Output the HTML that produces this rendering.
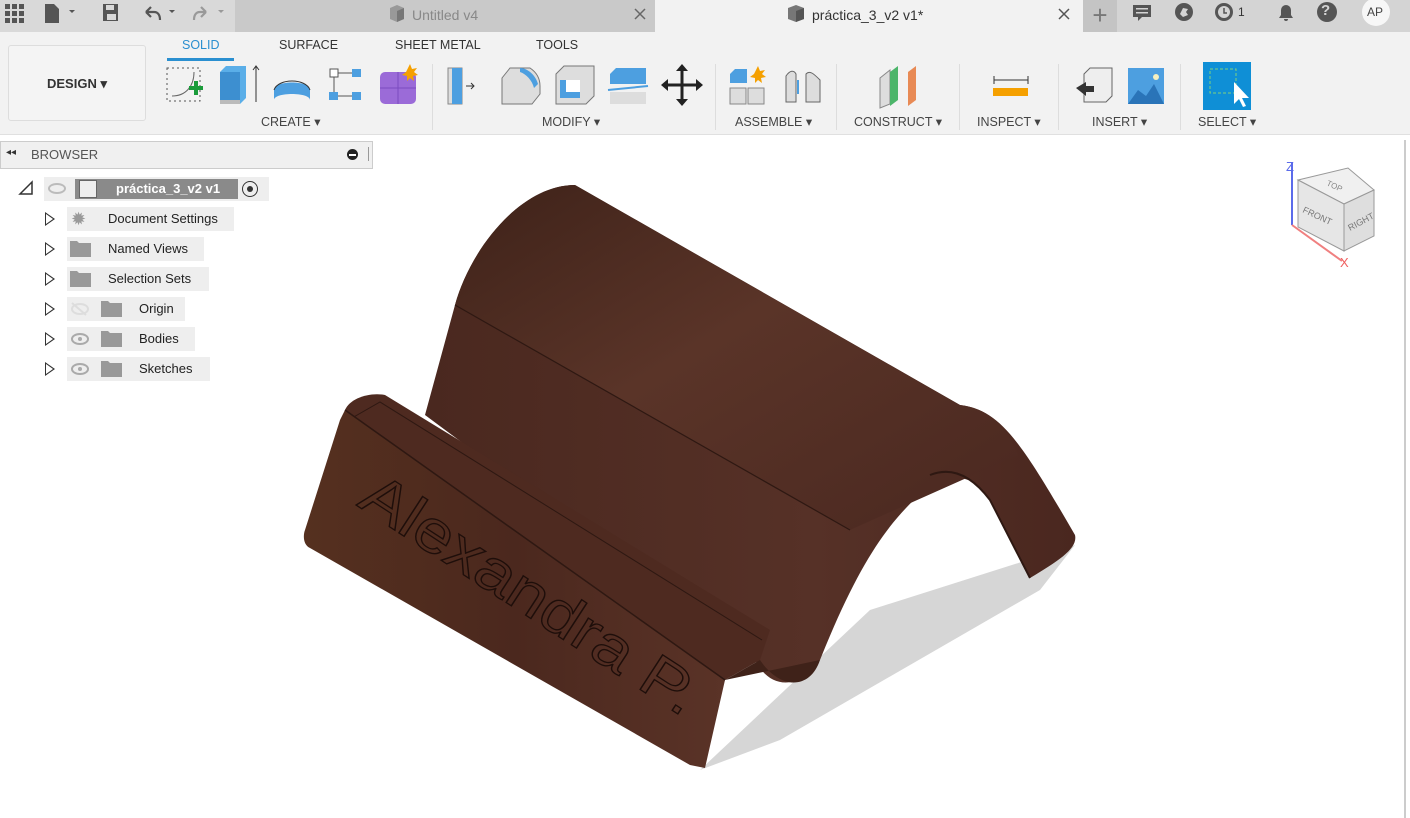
<!DOCTYPE html>
<html><head><meta charset="utf-8"><style>
*{margin:0;padding:0;box-sizing:border-box}
body{width:1410px;height:818px;overflow:hidden;background:#fff;font-family:"Liberation Sans",sans-serif;position:relative}
.a{position:absolute}
.lbl{position:absolute;top:114px;font-size:12.5px;color:#444}
.sep{position:absolute;top:64px;width:1px;height:66px;background:#ddd}
.row{position:absolute;height:24px;background:#eeeeee;font-size:13px;color:#222;line-height:24px}
.tri{position:absolute;width:0;height:0;border-top:7px solid transparent;border-bottom:7px solid transparent;border-left:10px solid #333}
.tri::after{content:"";position:absolute;left:-9px;top:-5px;border-top:5px solid transparent;border-bottom:5px solid transparent;border-left:7px solid #fff}
</style></head><body>
<!-- top bar -->
<div class="a" style="left:0;top:0;width:235px;height:32px;background:#d9d9d9"></div>
<div class="a" style="left:235px;top:0;width:420px;height:32px;background:#c9c9c9"></div>
<div class="a" style="left:655px;top:0;width:428px;height:32px;background:#f2f2f2"></div>
<div class="a" style="left:1083px;top:0;width:327px;height:32px;background:#d4d4d4"></div>
<div class="a" style="left:1083px;top:0;width:34px;height:32px;background:#c4c4c4;color:#777;font-size:26px;text-align:center;line-height:30px">+</div>
<svg class="a" style="left:0;top:0" width="1410" height="32">
<g fill="#555"><rect x="5" y="4" width="5" height="5"/><rect x="12" y="4" width="5" height="5"/><rect x="19" y="4" width="5" height="5"/><rect x="5" y="11" width="5" height="5"/><rect x="12" y="11" width="5" height="5"/><rect x="19" y="11" width="5" height="5"/><rect x="5" y="18" width="5" height="5"/><rect x="12" y="18" width="5" height="5"/><rect x="19" y="18" width="5" height="5"/>
<path d="M45 4h9l5 5v14h-14z"/><path d="M69 10l3 3 3-3z"/>
<path d="M103 4h15v17h-15z"/>
<path d="M169 10l3 3 3-3z"/></g>
<rect x="106" y="5" width="8" height="5" fill="#d9d9d9"/><rect x="107" y="14" width="9" height="6" fill="#d9d9d9"/>
<path d="M146 12l5-5M146 12l5 5M146 12h8c4 0 6 3 6 8" stroke="#555" stroke-width="2.2" fill="none"/>
<path d="M206 12l-5-5M206 12l-5 5M206 12h-6c-4 0-6 3-6 8" stroke="#999" stroke-width="2.2" fill="none"/><path d="M218 10l3 3 3-3z" fill="#999"/>
<path d="M390 8l7-3 7 3v11l-7 3-7-3z" fill="#999"/><path d="M397 11v11l7-3V8z" fill="#777"/>
<path d="M635 9l10 10M645 9l-10 10" stroke="#666" stroke-width="1.5"/>
<path d="M788 8l8-3 8 3v11l-8 3-8-3z" fill="#777"/><path d="M796 11v11l8-3V8z" fill="#555"/>
<path d="M1059 9l10 10M1069 9l-10 10" stroke="#555" stroke-width="1.5"/>
<path d="M1133 5h18v12h-9l-4 4v-4h-5z" fill="#555"/><rect x="1136" y="8" width="12" height="1.5" fill="#d4d4d4"/><rect x="1136" y="12" width="12" height="1.5" fill="#d4d4d4"/>
<circle cx="1184" cy="12" r="9" fill="#555"/><path d="M1180 14l3-6 5 1-2 3 2 3-5 2z" fill="#d4d4d4"/>
<circle cx="1224" cy="12" r="9" fill="#555"/><circle cx="1224" cy="12" r="6" fill="#d4d4d4"/><path d="M1224 8v5h3" stroke="#555" stroke-width="1.5" fill="none"/>
<path d="M1279 18h14l-2-3v-5a5 5 0 0 0-10 0v5z M1284 19h4a2 2 0 0 1-4 0z" fill="#555"/>
<circle cx="1327" cy="12" r="10" fill="#555"/>
<circle cx="1376" cy="12" r="14" fill="#f7f7f7"/>
</svg>
<div class="a" style="left:412px;top:7px;font-size:14px;color:#888">Untitled v4</div>
<div class="a" style="left:812px;top:7px;font-size:14px;color:#333">práctica_3_v2 v1*</div>
<div class="a" style="left:1238px;top:5px;font-size:12px;color:#333">1</div>
<div class="a" style="left:1321px;top:2px;font-size:15px;font-weight:bold;color:#d4d4d4">?</div>
<div class="a" style="left:1367px;top:5px;font-size:12px;color:#444">AP</div>

<!-- toolbar -->
<div class="a" style="left:0;top:32px;width:1410px;height:103px;background:#f2f2f2;border-bottom:1px solid #e0e0e0"></div>
<div class="a" style="left:8px;top:45px;width:138px;height:76px;border:1px solid #ddd;border-radius:3px;background:#f4f4f4;font-size:13px;font-weight:bold;color:#333;text-align:center;line-height:76px">DESIGN ▾</div>
<div class="a" style="left:182px;top:38px;font-size:12.5px;color:#2a8fd0">SOLID</div>
<div class="a" style="left:167px;top:58px;width:67px;height:3px;background:#2a8fd0"></div>
<div class="a" style="left:279px;top:38px;font-size:12.5px;color:#333">SURFACE</div>
<div class="a" style="left:395px;top:38px;font-size:12.5px;color:#333">SHEET METAL</div>
<div class="a" style="left:536px;top:38px;font-size:12.5px;color:#333">TOOLS</div>
<div class="lbl" style="left:261px">CREATE ▾</div>
<div class="lbl" style="left:542px">MODIFY ▾</div>
<div class="lbl" style="left:735px">ASSEMBLE ▾</div>
<div class="lbl" style="left:854px">CONSTRUCT ▾</div>
<div class="lbl" style="left:977px">INSPECT ▾</div>
<div class="lbl" style="left:1092px">INSERT ▾</div>
<div class="lbl" style="left:1198px">SELECT ▾</div>
<div class="sep" style="left:432px"></div><div class="sep" style="left:715px"></div><div class="sep" style="left:836px"></div><div class="sep" style="left:959px"></div><div class="sep" style="left:1058px"></div><div class="sep" style="left:1180px"></div>
<svg class="a" style="left:0;top:60px" width="1300" height="50">
<rect x="167" y="8" width="33" height="33" fill="none" stroke="#555" stroke-dasharray="2 3"/><path d="M172 36c14 0 22-10 22-24" stroke="#666" fill="none"/><path d="M189 26h5v-5h4v5h5v4h-5v5h-4v-5h-5z" fill="#1a9b3a"/>
<path d="M220 12l6-6h20v32l-6 6h-20z" fill="#5aaee8"/><path d="M220 12h20v32h-20z" fill="#3d8fd0"/><rect x="220" y="40" width="20" height="4" fill="#bbb"/><path d="M256 42V6M253 10l3-4 3 4" stroke="#333" fill="none"/>
<path d="M274 30c0-10 36-10 36 0v10c0-8-36-8-36 0z" fill="#4d9fe0"/><path d="M274 30c4-12 32-12 36 0" stroke="#333" fill="none"/>
<rect x="330" y="9" width="8" height="8" fill="#fff" stroke="#555"/><rect x="352" y="9" width="9" height="8" fill="#4d9fe0"/><rect x="329" y="32" width="9" height="8" fill="#4d9fe0"/><rect x="352" y="32" width="9" height="8" fill="#4d9fe0"/><path d="M338 13h14M334 17v15M338 36h14" stroke="#555"/>
<rect x="380" y="12" width="36" height="32" rx="5" fill="#9b6bd8"/><path d="M398 12v32M380 28h36" stroke="#7b4bc0"/><path d="M410 4l2 5 5-1-3 4 4 3-5 1 1 5-4-3-3 3v-5l-5-1 4-3z" fill="#f5a000"/>
<path d="M448 8h14v36h-14z" fill="#ddd" stroke="#888"/><path d="M452 8h10v36h-10z" fill="#4d9fe0"/><path d="M466 26h8M471 23l3 3-3 3" stroke="#333" fill="none"/>
<path d="M502 18l8-10h20c6 4 10 10 10 18v8l-8 10h-30z" fill="#ddd" stroke="#777"/><path d="M520 8c8 0 16 8 18 16l-4 4c-2-8-8-14-14-16z" fill="#4d9fe0"/>
<path d="M556 14l8-8h30v30l-8 8h-30z" fill="#ddd" stroke="#777"/><rect x="560" y="20" width="20" height="18" fill="#4d9fe0"/><rect x="566" y="20" width="14" height="12" fill="#fff"/>
<path d="M610 14l6-6h30v16h-36z" fill="#4d9fe0"/><path d="M608 30l40-4" stroke="#4d9fe0" stroke-width="2"/><path d="M610 32h36v12h-36z" fill="#ddd"/>
<path d="M682 6v38M663 25h38" stroke="#222" stroke-width="3"/><path d="M682 4l-6 7h12zM682 46l-6-7h12zM661 25l7-6v12zM703 25l-7-6v12z" fill="#222"/>
<path d="M730 14l5-5h12v14h-17z" fill="#4d9fe0"/><path d="M730 28h16v16h-16zM748 28h16v16h-16z" fill="#ddd" stroke="#888"/><path d="M758 6l2 5 5-1-3 4 4 3-5 1 1 5-4-3-3 3v-5l-5-1 4-3z" fill="#f5a000"/>
<path d="M786 16c4-6 8-6 10-2v28h-10z M806 14c4-4 8 0 14 6v22h-14z" fill="#ddd" stroke="#666"/><path d="M798 20v14" stroke="#4d9fe0" stroke-width="2"/>
<path d="M880 18l10-8v34l-10 4z" fill="#ddd" stroke="#888"/><path d="M890 12l8-6v34l-8 6z" fill="#4cb56a"/><path d="M908 12l8-6v34l-8 6z" fill="#e88a55"/>
<path d="M994 20h34M994 16v8M1028 16v8" stroke="#333"/><rect x="993" y="28" width="35" height="8" fill="#f5a000"/>
<path d="M1084 14l6-6h22v28l-6 6h-22z" fill="#eee" stroke="#666"/><path d="M1076 28l10-6v4h8v6h-8v4z" fill="#333"/>
<rect x="1128" y="8" width="36" height="36" fill="#4d9fe0"/><path d="M1128 44l10-14 8 6 8-12 10 20z" fill="#2a74b8"/><circle cx="1156" cy="17" r="3" fill="#f5f0c0"/>
<rect x="1203" y="2" width="48" height="48" fill="#0f8fd6"/><rect x="1210" y="9" width="26" height="24" fill="none" stroke="#7fd07f" stroke-dasharray="3 2"/><path d="M1234 22v22l5-5 4 8 3-1-4-8h7z" fill="#fff"/>
</svg>

<!-- browser -->
<div class="a" style="left:0;top:141px;width:373px;height:28px;background:#f0f0f0;border:1px solid #ccc"></div>
<div class="a" style="left:6px;top:147px;font-size:10px;color:#333">◂◂</div>
<div class="a" style="left:31px;top:147px;font-size:13px;color:#555">BROWSER</div>
<div class="a" style="left:347px;top:149px;width:11px;height:11px;border-radius:50%;background:#222"></div><div class="a" style="left:349px;top:154px;width:7px;height:2px;background:#fff"></div>
<div class="a" style="left:368px;top:147px;width:1px;height:14px;background:#999"></div>
<svg class="a" style="left:18px;top:180px" width="16" height="16"><path d="M2 14L14 2v12z" fill="none" stroke="#333" stroke-width="1.5"/></svg>
<div class="row" style="left:44px;top:177px;width:225px"></div>
<div class="a" style="left:48px;top:183px;width:18px;height:11px;border-radius:50%;border:2px solid #bbb"></div>
<div class="a" style="left:75px;top:179px;width:163px;height:20px;background:#8a8a8a"></div>
<div class="a" style="left:79px;top:180px;width:18px;height:18px;background:#eee;border:1px solid #666"></div>
<div class="a" style="left:116px;top:181px;font-size:13px;font-weight:bold;color:#fff">práctica_3_v2 v1</div>
<div class="a" style="left:242px;top:181px;width:16px;height:16px;border-radius:50%;border:1.5px solid #333"></div><div class="a" style="left:247px;top:186px;width:6px;height:6px;border-radius:50%;background:#333"></div>
<div class="tri" style="left:45px;top:212px"></div><div class="row" style="left:67px;top:207px;width:167px"><span style="margin-left:41px">Document Settings</span></div>
<div class="a" style="left:71px;top:211px;font-size:18px;color:#999;line-height:16px">✹</div>
<div class="tri" style="left:45px;top:242px"></div><div class="row" style="left:67px;top:237px;width:137px"><span style="margin-left:41px">Named Views</span></div>
<div class="tri" style="left:45px;top:272px"></div><div class="row" style="left:67px;top:267px;width:142px"><span style="margin-left:41px">Selection Sets</span></div>
<div class="tri" style="left:45px;top:302px"></div><div class="row" style="left:67px;top:297px;width:118px"><span style="margin-left:72px">Origin</span></div>
<div class="tri" style="left:45px;top:332px"></div><div class="row" style="left:67px;top:327px;width:128px"><span style="margin-left:72px">Bodies</span></div>
<div class="tri" style="left:45px;top:362px"></div><div class="row" style="left:67px;top:357px;width:143px"><span style="margin-left:72px">Sketches</span></div>
<svg class="a" style="left:0;top:0" width="260" height="400">
<g fill="#999"><path d="M70 241h7l2 2h12v14h-21z"/><path d="M70 271h7l2 2h12v14h-21z"/><path d="M101 301h7l2 2h12v14h-21z"/><path d="M101 331h7l2 2h12v14h-21z"/><path d="M101 361h7l2 2h12v14h-21z"/></g>
<g fill="none" stroke="#aaa" stroke-width="2"><ellipse cx="80" cy="339" rx="8" ry="5"/><ellipse cx="80" cy="369" rx="8" ry="5"/></g><circle cx="80" cy="339" r="2" fill="#aaa"/><circle cx="80" cy="369" r="2" fill="#aaa"/>
<g fill="none" stroke="#ddd" stroke-width="2"><ellipse cx="80" cy="309" rx="8" ry="5"/><path d="M72 303l14 12"/></g>
</svg>

<!-- viewcube -->
<svg class="a" style="left:1280px;top:155px" width="110" height="115">
<path d="M12 8v62" stroke="#5b6bea" stroke-width="2"/><text x="6" y="16" font-size="13" fill="#5b6bea" font-family="Liberation Sans">Z</text>
<path d="M12 70l50 36" stroke="#f08080" stroke-width="2"/><text x="60" y="112" font-size="13" fill="#f06060" font-family="Liberation Sans">X</text>
<path d="M18 25l50-12 26 22-30 14z" fill="#f0f0f0" stroke="#999"/>
<path d="M18 25l46 24v47l-46-24z" fill="#e6e6e6" stroke="#999"/>
<path d="M64 49l30-14v46l-30 15z" fill="#dedede" stroke="#999"/>
<text x="46" y="30" font-size="8" fill="#888" transform="rotate(25 46 30)" font-family="Liberation Sans">TOP</text>
<text x="22" y="57" font-size="9" fill="#777" transform="rotate(25 22 57)" font-family="Liberation Sans">FRONT</text>
<text x="70" y="76" font-size="9" fill="#777" transform="rotate(-28 70 76)" font-family="Liberation Sans">RIGHT</text>
</svg>
<div class="a" style="left:1404px;top:140px;width:2px;height:678px;background:#ccc"></div>

<!-- model -->
<svg class="a" style="left:0;top:0" width="1410" height="818">
<defs>
<linearGradient id="g1" x1="0" y1="0" x2="1" y2="1"><stop offset="0" stop-color="#3e2219"/><stop offset=".45" stop-color="#5a3428"/><stop offset="1" stop-color="#4a2820"/></linearGradient>
<linearGradient id="g2" x1="0" y1="0" x2="1" y2="0"><stop offset="0" stop-color="#55301f"/><stop offset=".5" stop-color="#4b281e"/><stop offset="1" stop-color="#5a3327"/></linearGradient>
<linearGradient id="g3" x1="0" y1="0" x2="1" y2="0"><stop offset="0" stop-color="#4a281f"/><stop offset=".6" stop-color="#563127"/><stop offset="1" stop-color="#4a271f"/></linearGradient>
</defs>
<path d="M700 770L870 610L1075 545L1040 590L780 740z" fill="#d6d6d6"/>
<path d="M425 415L455 305C470 250 520 185 575 185L960 405C1000 410 1020 440 1075 535C1078 548 1060 560 1030 578L990 500C975 475 950 470 925 490C890 520 860 560 820 660C800 690 770 690 755 660Z" fill="url(#g3)"/>
<path d="M455 305C470 250 520 185 575 185L960 405C985 408 1005 422 1018 455L850 530Z" fill="url(#g1)"/>
<path d="M455 305L850 530" stroke="#2e1812" stroke-width="1.2"/>
<path d="M930 475C955 465 975 480 990 500L1030 578" stroke="#2e1812" stroke-width="2" fill="none"/>
<path d="M345 410C350 398 370 392 385 395L770 630L760 660L725 680Z" fill="#4e2a20"/>
<path d="M352 418L380 402L762 640" stroke="#2e1812" stroke-width="1" fill="none"/>
<path d="M340 420L345 410L725 680L705 768L690 765L310 548C303 545 303 535 305 530Z" fill="url(#g2)"/>
<path d="M345 410L725 680" stroke="#2e1812" stroke-width="1.5"/>
<path d="M725 680L760 660C780 690 810 690 820 660" fill="#3f2219"/>
<text x="356" y="505" font-size="60" fill="none" stroke="#1e0e0a" stroke-width="1.3" transform="rotate(33 356 505)" font-family="Liberation Sans" textLength="390" lengthAdjust="spacingAndGlyphs">Alexandra P.</text>
</svg>
</body></html>
